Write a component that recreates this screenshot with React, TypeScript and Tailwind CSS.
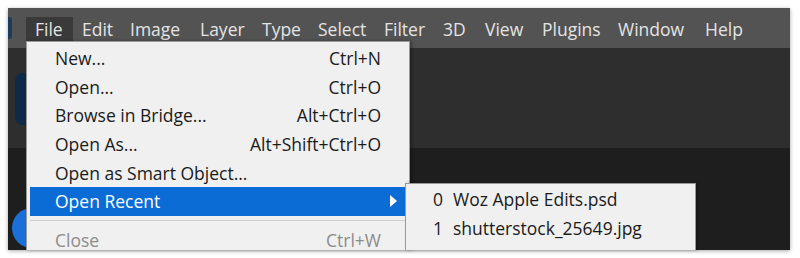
import React from "react";

const menus = [
  { label: "File", w: "w-[47px]", active: true },
  { label: "Edit", w: "w-[48px]" },
  { label: "Image", w: "w-[70px]" },
  { label: "Layer", w: "w-[62px]" },
  { label: "Type", w: "w-[56px]" },
  { label: "Select", w: "w-[66px]" },
  { label: "Filter", w: "w-[59px]" },
  { label: "3D", w: "w-[42px]" },
  { label: "View", w: "w-[57px]" },
  { label: "Plugins", w: "w-[76px]" },
  { label: "Window", w: "w-[87px]" },
  { label: "Help", w: "w-[50px]" },
];

const fileItems = [
  { label: "New...", key: "Ctrl+N" },
  { label: "Open...", key: "Ctrl+O" },
  { label: "Browse in Bridge...", key: "Alt+Ctrl+O" },
  { label: "Open As...", key: "Alt+Shift+Ctrl+O" },
  { label: "Open as Smart Object...", key: "" },
];

const recent = ["Woz Apple Edits.psd", "shutterstock_25649.jpg"];

export default function App() {
  return (
    <div className="w-[800px] h-[258px] bg-white pt-[8px] pl-[8px] pr-[10px] pb-[8px] font-['Open_Sans',sans-serif]">
      <div className="relative w-full h-full flex flex-col bg-[#1e1e1e] shadow-[0_1px_4px_rgba(0,0,0,0.35)]">
        {/* menu bar */}
        <div className="h-[40px] bg-[#535353] flex items-center pl-[18px] relative">
          <div className="absolute left-0 top-[9px] w-[4px] h-[22px] rounded-r-[3px] bg-[#1d3a5c]" />
          {menus.map((m) => (
            <div
              key={m.label}
              className={`${m.w} h-[24px] mt-[2px] pl-[9px] flex items-center text-[17.5px] text-[#e4e4e4] ${m.active ? "bg-[#3a3a3a]" : ""}`}
            >
              {m.label}
            </div>
          ))}
        </div>

        {/* workspace */}
        <div className="h-[100px] bg-[#2e2e2e] relative">
          <div className="absolute left-[7px] top-[25px] w-[30px] h-[52px] rounded-[8px] bg-[#0e2a47]" />
        </div>
        <div className="flex-1 bg-[#1e1e1e] relative">
          <div className="absolute left-[4px] top-[60px] w-[40px] h-[40px] rounded-full bg-[#1b6fd9]" />
        </div>

        {/* File dropdown */}
        <div className="absolute left-[18px] top-[33px] w-[384px] h-[209px] bg-[#f0f0f0] border border-b-0 border-[#9a9a9a] pt-[2px] text-[17.5px] text-[#1b1b1b] shadow-[2px_0_3px_rgba(0,0,0,0.3)]">
          {fileItems.map((it) => (
            <div key={it.label} className="h-[28.6px] mx-[3px] pl-[25px] pr-[25px] flex items-center justify-between">
              <span>{it.label}</span>
              <span>{it.key}</span>
            </div>
          ))}
          <div className="h-[28.6px] mx-[3px] pl-[25px] pr-[8px] flex items-center justify-between bg-[#0b6cd6] text-white">
            <span>Open Recent</span>
            <svg width="8" height="12" viewBox="0 0 8 12">
              <path d="M0 0 L7 6 L0 12 Z" fill="#ffffff" />
            </svg>
          </div>
          <div className="h-[10px] mx-[3px] flex items-center">
            <div className="w-full h-px bg-[#cfcfcf]" />
          </div>
          <div className="mt-[6px] mx-[3px] pl-[25px] pr-[25px] flex justify-between leading-[17px] text-[#8c8c8c]">
            <span>Close</span>
            <span>Ctrl+W</span>
          </div>
        </div>

        {/* Open Recent submenu */}
        <div className="absolute left-[397px] top-[175px] w-[291px] h-[67px] bg-[#f0f0f0] border border-b-0 border-[#9a9a9a] pt-[1px] pl-[27px] text-[17.5px] text-[#1b1b1b] shadow-[2px_0_3px_rgba(0,0,0,0.3)]">
          {recent.map((r, i) => (
            <div key={r} className="h-[29px] flex items-center">
              <span className="w-[20px]">{i}</span>
              <span>{r}</span>
            </div>
          ))}
        </div>
      </div>
    </div>
  );
}
